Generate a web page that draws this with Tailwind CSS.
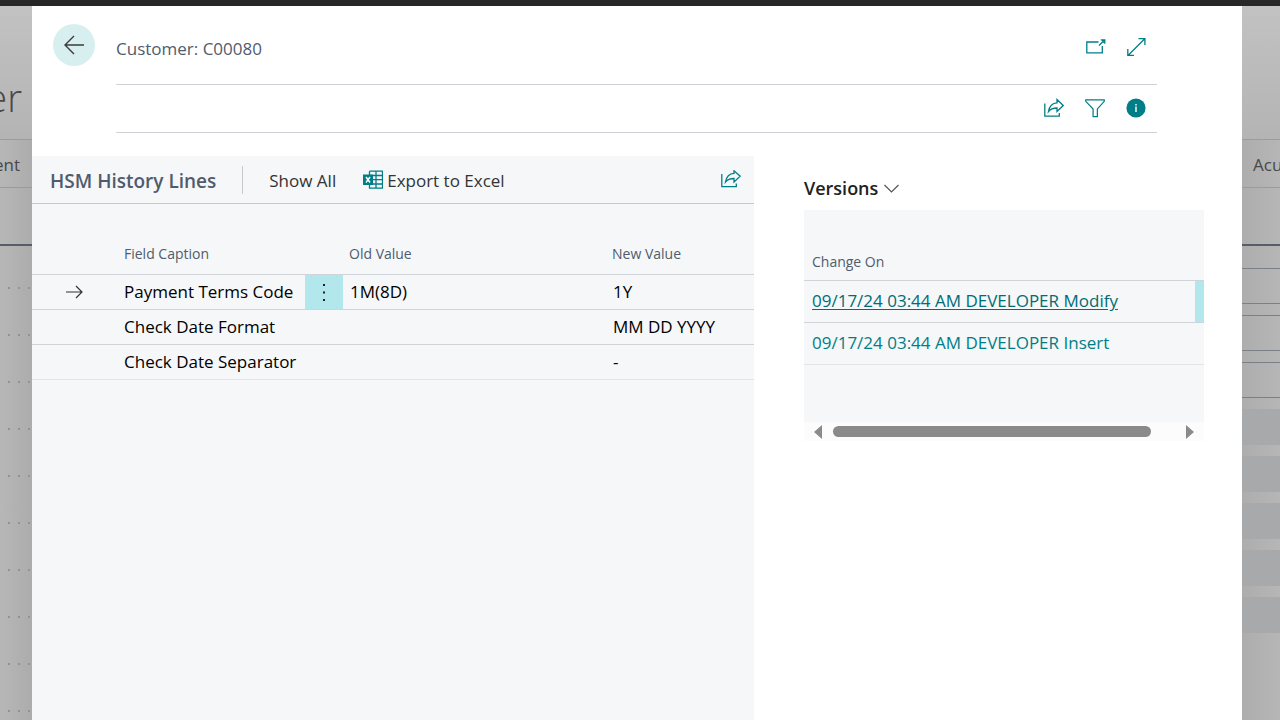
<!DOCTYPE html>
<html lang="en">
<head>
  <meta charset="UTF-8" />
  <meta name="viewport" content="width=device-width, initial-scale=1.0" />
  <title>Customer: C00080</title>
  <script src="https://cdn.jsdelivr.net/npm/@tailwindcss/browser@4"></script>
</head>
<body class="h-screen overflow-hidden flex flex-col bg-[#b2b2b2] font-['Open_Sans','Noto_Sans',sans-serif] text-[17px] leading-6 text-[#212121]">
  <div class="h-1.5 shrink-0 bg-[#272727]"></div>

  <div class="flex flex-1 min-h-0">
    <!-- Dimmed page, left edge -->
    <aside class="w-8 shrink-0 overflow-hidden bg-linear-to-r from-[#b7b7b7] to-[#acacac]">
      <div class="h-[133px] flex items-end justify-end pr-2.5 pb-[18px] bg-linear-to-b from-[#c2c2c2] to-[#b4b4b4]">
        <h1 class="text-[38px] leading-[48px] font-light text-[#484848]">er</h1>
      </div>
      <div class="h-[49px] flex items-center justify-end pr-3 pt-0.5 border-y border-[#9b9b9b] text-[#484848]">ent</div>
      <div class="h-[58px] border-b-2 border-[#565d68]"></div>
      <div id="leaders" class="pt-4.5"></div>
    </aside>

    <!-- Dialog -->
    <main class="flex-1 min-w-0 flex flex-col bg-white">
      <header class="flex pl-[21px] pr-[85px]">
        <button aria-label="Back" class="mt-[18px] mr-[21px] size-[42px] shrink-0 rounded-full bg-[#d8eff0] flex items-center justify-center">
          <svg class="w-5 h-5" viewBox="0 0 20 20" fill="none" stroke="#3b3b3b" stroke-width="1.4"><path d="M20 10H1M10 1L1 10l9 9" /></svg>
        </button>
        <div class="flex-1 min-w-0">
          <div class="h-[79px] flex items-center justify-between pr-[11px] pb-0.5 pt-1.5 border-b border-[#cfd2d6]">
            <h2 class="text-[#505c6d] pt-1">Customer: C00080</h2>
            <div class="flex gap-5">
              <button aria-label="Open in new window">
                <svg class="size-5" viewBox="0 0 20 20" fill="none" stroke="#007e87" stroke-width="1.3"><path d="M12.500 5H.8v10.800h15.500V9M13 8.500L18.500 3M14.800 2.800h4v4M16 3.500l2 2" /></svg>
              </button>
              <button aria-label="Expand">
                <svg class="size-5" viewBox="0 0 20 20" fill="none" stroke="#007e87" stroke-width="1.3"><path d="M2 18.500L19 1.500M12.500 1.600h6.400V8M8 18.400H1.800V12" /></svg>
              </button>
            </div>
          </div>
          <div class="h-12 flex items-center justify-end gap-[21px] pr-[11px] pb-0.5 border-b border-[#cfd2d6]">
            <button aria-label="Share">
              <svg class="size-5" viewBox="0 0 20 20" fill="none" stroke="#007e87" stroke-width="1.3"><path d="M.8 5.500v12.700h14.500V15M4.500 13.500C5.500 7.500 8.500 5 13 4.800V1.500l6.200 6-6.200 6V10c-4 0-6.500 1-8.500 3.500z" /></svg>
            </button>
            <button aria-label="Filter">
              <svg class="size-5" viewBox="0 0 21 21" fill="none" stroke="#007e87" stroke-width="1.3"><path d="M.8 2h19.400v1.500l-7.200 8V19.500H8.500v-8L.8 3.500z" /></svg>
            </button>
            <button aria-label="Information">
              <svg class="size-5" viewBox="0 0 20 20"><circle cx="10" cy="10" r="9.600" fill="#007e87" /><path d="M9.300 6h1.400v1.400H9.300zM9.300 8.600h1.400v5.400H9.300z" fill="#fff" /></svg>
            </button>
          </div>
        </div>
      </header>

      <div class="flex flex-1 min-h-0 mt-[23px] pr-[38px] gap-[50px]">
        <section class="flex-1 min-w-0 bg-[#f5f7f9]">
          <div class="h-12 flex items-center border-b border-[#c5c8cc] pl-[18px] pr-[13px]">
            <h3 class="text-[19px] font-semibold text-[#505c6d] pt-0.5">HSM History Lines</h3>
            <div class="w-px h-7 mx-[26px] bg-[#c5c8cc]"></div>
            <button class="text-[#333333] pt-0.5">Show All</button>
            <button class="ml-[27px] flex items-center gap-1 text-[#333333]">
              <svg class="size-5" viewBox="0 0 20 20"><path d="M6.500 1.200h13v17h-13V15M6.500 5V1.200M13 1v17M7 5.500h12.500M9 9.700h10.500M7 14h12.500" fill="none" stroke="#007e87" stroke-width="1.300" /><path d="M0 4.500h10v10.500H0z" fill="#007e87" /><path d="M3 7l4 5.500M7 7l-4 5.500" stroke="#fff" stroke-width="1.500" /></svg>
              <span class="pt-0.5">Export to Excel</span>
            </button>
            <button aria-label="Share lines" class="ml-auto">
              <svg class="size-5" viewBox="0 0 20 20" fill="none" stroke="#007e87" stroke-width="1.3"><path d="M.8 4v12.700h14.500V13.500M4.500 12C5.500 6 8.500 3.500 13 3.300V.8l6.200 5.400L13 12V8.500c-4 0-6.500 1-8.500 3.500z" /></svg>
            </button>
          </div>

          <table class="w-full table-fixed text-left text-black">
            <colgroup>
              <col class="w-[84px]" />
              <col class="w-[189px]" />
              <col class="w-[38px]" />
              <col class="w-[263px]" />
              <col />
            </colgroup>
            <thead>
              <tr class="h-[70px] align-bottom border-b border-[#d0d3d8] text-sm text-[#505c6d]">
                <td></td>
                <th scope="col" class="font-normal pl-2 pb-2.5">Field Caption</th>
                <td></td>
                <th scope="col" class="font-normal pl-1.5 pb-2.5">Old Value</th>
                <th scope="col" class="font-normal pl-1.5 pb-2.5">New Value</th>
              </tr>
            </thead>
            <tbody>
              <tr class="h-[35px] border-b border-[#d0d3d8]">
                <td>
                  <svg class="w-[17px] h-4 ml-[34px]" viewBox="0 0 17 16" fill="none" stroke="#333333" stroke-width="1.2"><path d="M0 8h16M10 2l6 6-6 6" /></svg>
                </td>
                <td class="pl-2 whitespace-nowrap">Payment Terms Code</td>
                <td class="bg-[#b2e8eb]">
                  <button aria-label="Show more options" class="w-full h-[34px] flex items-center justify-center">
                    <svg class="w-1 h-5" viewBox="0 0 4 20" fill="#212121"><path d="M1 2h2v2H1zM1 9.500h2v2H1zM1 17h2v2H1z" /></svg>
                  </button>
                </td>
                <td class="pl-[7px]">1M(8D)</td>
                <td class="pl-[7px]">1Y</td>
              </tr>
              <tr class="h-[35px] border-b border-[#d0d3d8]">
                <td></td>
                <td class="pl-2 whitespace-nowrap">Check Date Format</td>
                <td></td>
                <td></td>
                <td class="pl-[7px]">MM DD YYYY</td>
              </tr>
              <tr class="h-[35px] border-b border-[#e2e4e7]">
                <td></td>
                <td class="pl-2 whitespace-nowrap">Check Date Separator</td>
                <td></td>
                <td></td>
                <td class="pl-[7px]">-</td>
              </tr>
            </tbody>
          </table>
        </section>

        <!-- Factbox -->
        <section class="w-[400px] shrink-0">
          <div class="h-[54px] flex items-end pb-2.5">
            <button class="flex items-center gap-1.5 text-lg leading-6 font-semibold">
              Versions
              <svg class="w-[15px] h-[9px]" viewBox="0 0 15 9" fill="none" stroke="#555" stroke-width="1.200"><path d="M.5 1l7 7 7-7" /></svg>
            </button>
          </div>
          <div class="h-[212px] bg-[#f5f7f9]">
            <table class="w-full table-fixed text-left">
              <thead>
                <tr class="h-[70px] align-bottom border-b border-[#d0d3d8] text-sm text-[#505c6d]">
                  <th scope="col" class="font-normal pl-2 pb-2">Change On</th>
                  <td class="w-[9px]"></td>
                </tr>
              </thead>
              <tbody>
                <tr class="h-[42px] border-b border-[#d0d3d8]">
                  <td class="pl-2 whitespace-nowrap"><a href="#" class="text-[#006d75] underline underline-offset-2">09/17/24 03:44 AM DEVELOPER Modify</a></td>
                  <td class="bg-[#b2e8eb]"></td>
                </tr>
                <tr class="h-[42px] border-b border-[#e2e4e7]">
                  <td class="pl-2 whitespace-nowrap"><a href="#" class="text-[#007e87]">09/17/24 03:44 AM DEVELOPER Insert</a></td>
                  <td></td>
                </tr>
              </tbody>
            </table>
          </div>
          <div class="h-[19px] flex items-center px-2.5 bg-[#fcfcfc]">
            <svg class="w-2 h-3.5" viewBox="0 0 8 14" fill="#8a8a8a"><path d="M8 0v14L0 7z" /></svg>
            <div class="flex-1 mx-[11px]"><div class="w-[93%] h-[11px] rounded-full bg-[#8a8a8a]"></div></div>
            <svg class="w-2 h-3.5" viewBox="0 0 8 14" fill="#8a8a8a"><path d="M0 0v14l8-7z" /></svg>
          </div>
        </section>
      </div>
    </main>

    <!-- Dimmed page, right edge -->
    <aside class="w-[38px] shrink-0 overflow-hidden bg-linear-to-r from-[#adadad] to-[#b6b6b6]">
      <div class="h-[133px] bg-linear-to-b from-[#c2c2c2] to-[#b4b4b4]"></div>
      <div class="h-[49px] flex items-center pl-[11px] pt-0.5 border-y border-[#9b9b9b] text-[#484848]">Acu</div>
      <div class="h-[58px] border-b-2 border-[#565d68]"></div>
      <div id="fields" class="pt-[22px] flex flex-col gap-[11px]"></div>
    </aside>
  </div>

  <script>
    const leaders = document.getElementById('leaders');
    for (let i = 0; i < 10; i++) {
      leaders.innerHTML += `
        <div class="h-[47px] flex items-center justify-end gap-2 pr-0.5">
          <span class="size-0.5 bg-[#8e9394]"></span>
          <span class="size-0.5 bg-[#8e9394]"></span>
          <span class="size-0.5 bg-[#8e9394]"></span>
        </div>`;
    }

    // The first three fields can be edited, the rest are locked
    const fields = document.getElementById('fields');
    for (let i = 0; i < 8; i++) {
      fields.innerHTML += i < 3
        ? `<input type="text" aria-label="Field ${i + 1}" class="w-full h-9 border-y border-[#7b8087]" />`
        : `<input type="text" aria-label="Field ${i + 1}" disabled class="w-full h-9 bg-[#a7a9ab]" />`;
    }
  </script>
</body>
</html>
